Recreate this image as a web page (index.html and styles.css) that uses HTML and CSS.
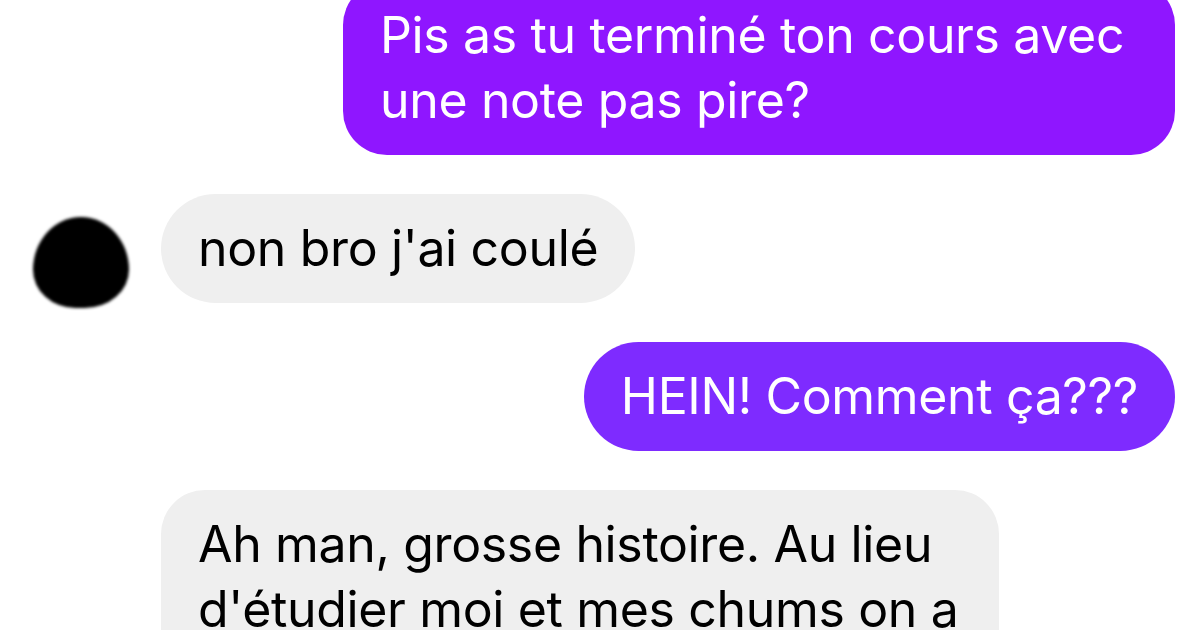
FILE: index.html
```html
<!DOCTYPE html>
<html lang="fr">
<head>
<meta charset="utf-8">
<title>Messages</title>
<link rel="stylesheet" href="styles.css">
</head>
<body>
<main class="thread">
  <div class="row sent">
    <div class="bubble out out-top">Pis as tu terminé ton cours avec une note pas pire?</div>
  </div>
  <div class="row received">
    <div class="avatar"></div>
    <div class="bubble in pill">non bro j'ai coulé</div>
  </div>
  <div class="row sent">
    <div class="bubble out out-bottom pill">HEIN! Comment ça???</div>
  </div>
  <div class="row received">
    <div class="avatar-space"></div>
    <div class="bubble in wide">Ah man, grosse histoire. Au lieu d'étudier moi et mes chums on a décidé de sortir</div>
  </div>
</main>
</body>
</html>
```

FILE: styles.css
```css
* { box-sizing: border-box; }
html, body {
  margin: 0;
  padding: 0;
  background: #ffffff;
  width: 1200px;
  height: 630px;
  overflow: hidden;
}
.thread {
  display: flex;
  flex-direction: column;
  gap: 39px;
  margin-top: -19px;
  font-family: "Inter", "Liberation Sans", sans-serif;
  font-size: 50px;
  line-height: 65px;
  letter-spacing: -0.35px;
}
.row {
  display: flex;
  align-items: flex-end;
}
.row.sent {
  justify-content: flex-end;
  padding-right: 25px;
}
.row.received {
  padding-left: 33px;
  gap: 32px;
}
.bubble {
  padding: 22px 37px;
  border-radius: 44px;
}
.bubble.pill { border-radius: 56px; }
.out { color: #ffffff; }
.out-top { background: #8f16ff; max-width: 832px; }
.out-bottom { background: #7e2bff; }
.in { background: #efefef; color: #000000; }
.wide { max-width: 838px; padding-right: 32px; }
.avatar {
  width: 96px;
  height: 91px;
  margin-bottom: -5px;
  background: #000000;
  border-radius: 50% 50% 46% 44% / 58% 58% 42% 42%;
  filter: blur(1.5px);
  flex: none;
}
.avatar-space { width: 96px; flex: none; }
```
